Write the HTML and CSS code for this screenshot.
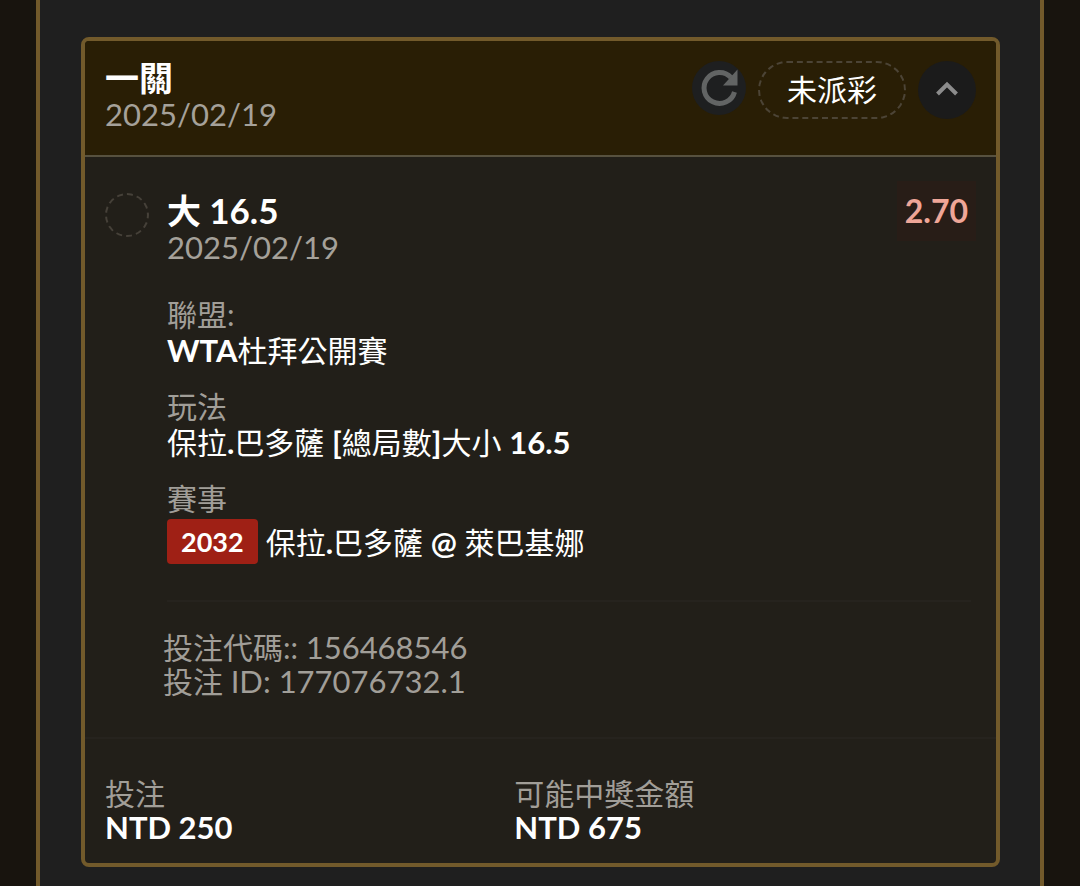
FILE: index.html
```html
<!DOCTYPE html>
<html lang="zh-Hant">
<head>
    <meta charset="UTF-8">
    <meta name="viewport" content="width=device-width, initial-scale=1.0">
    <title>投注紀錄</title>
    <link rel="stylesheet" href="styles.css">
</head>
<body>

    <main class="panel">
        <article class="ticket">
            <header class="ticket-header">
                <div class="ticket-info">
                    <h2 class="ticket-title">一關</h2>
                    <p class="date">2025/02/19</p>
                </div>
                <div class="actions">
                    <button type="button" class="refresh" aria-label="重新整理">
                        <svg width="40" height="40" viewBox="0 0 40 40">
                            <path d="M32 9.5A15.5 15.5 0 1 0 35.5 24" fill="none" stroke="#626464" stroke-width="5"/>
                            <path d="M38.5 1.5V17.5H24Z" fill="#626464"/>
                        </svg>
                    </button>
                    <span class="status">未派彩</span>
                    <button type="button" class="toggle" aria-label="收合">
                        <svg width="24" height="18" viewBox="0 0 24 18">
                            <path d="M2.5 13L12 3.5L21.5 13" fill="none" stroke="#8c8c8c" stroke-width="4"/>
                        </svg>
                    </button>
                </div>
            </header>

            <section class="bet">
                <span class="ring"></span>
                <div class="bet-main">
                    <div class="bet-top">
                        <div class="bet-name">
                            <h3 class="bet-title">大 <span class="num">16.5</span></h3>
                            <p class="date">2025/02/19</p>
                        </div>
                        <span class="odds">2.70</span>
                    </div>

                    <dl class="details">
                        <div>
                            <dt>聯盟:</dt>
                            <dd><b>WTA</b>杜拜公開賽</dd>
                        </div>
                        <div>
                            <dt>玩法</dt>
                            <dd>保拉<b>.</b>巴多薩 <b>[</b>總局數<b>]</b>大小 <b>16.5</b></dd>
                        </div>
                        <div>
                            <dt>賽事</dt>
                            <dd class="match">
                                <span class="match-id">2032</span>
                                <span>保拉<b>.</b>巴多薩 <b>@</b> 萊巴基娜</span>
                            </dd>
                        </div>
                    </dl>

                    <div class="codes">
                        <p>投注代碼:: <span class="code">156468546</span></p>
                        <p>投注 <span class="code">ID: 177076732.1</span></p>
                    </div>
                </div>
            </section>

            <footer class="totals">
                <div>
                    <p class="total-label">投注</p>
                    <p class="total-value">NTD 250</p>
                </div>
                <div>
                    <p class="total-label">可能中獎金額</p>
                    <p class="total-value">NTD 675</p>
                </div>
            </footer>
        </article>
    </main>

</body>
</html>
```
FILE: styles.css
```css
* {
    box-sizing: border-box;
}

body {
    margin: 0;
    background-color: #18140e;
    color: #fff;
    font-family: Lato, "Noto Sans CJK TC", sans-serif;
    font-size: 30px;
    line-height: 36px;
}

h2, h3, p, dl, dd {
    margin: 0;
}

b {
    font-size: 31px;
    line-height: 36px;
    font-weight: 700;
}

button {
    display: flex;
    align-items: center;
    justify-content: center;
    padding: 0;
    border: none;
    border-radius: 50%;
    cursor: pointer;
}

.panel {
    min-height: 100vh;
    margin: 0 36px;
    padding: 37px 40px 18px 41px;
    border: solid #725a2b;
    border-width: 0 4px;
    background-color: #1f1f1f;
}

.ticket {
    border: 4px solid #725a2b;
    border-radius: 8px;
    background-color: #221f19;
    overflow: hidden;
}

.ticket-header {
    display: flex;
    justify-content: space-between;
    align-items: flex-start;
    padding: 19px 20px 23px;
    border-bottom: 2px solid #57513f;
    background-color: #291e05;
}

.ticket-title, .bet-title {
    font-size: 34px;
    line-height: 36px;
    font-weight: 700;
}

.date {
    color: #a5a19a;
    font-size: 31px;
    line-height: 36px;
}

.actions {
    display: flex;
    align-items: flex-start;
    gap: 12px;
    padding-top: 1px;
}

.refresh {
    width: 54px;
    height: 54px;
    background-color: #1e1f20;
}

.toggle {
    width: 58px;
    height: 58px;
    background-color: #1b1b1b;
}

.status {
    padding: 8px 27px 10px;
    border: 2px dashed #4c4436;
    border-radius: 29px;
    line-height: 36px;
}

.bet {
    display: flex;
    gap: 18px;
    padding: 36px 20px 39px;
}

.ring {
    flex: none;
    width: 44px;
    height: 44px;
    border: 2px dashed #464139;
    border-radius: 50%;
}

.bet-main {
    flex: 1;
    margin-top: -1px;
}

.bet-top {
    display: flex;
    justify-content: space-between;
    align-items: flex-start;
}

.num {
    font-size: 35px;
}

.odds {
    margin-top: -11px;
    padding: 12px 8px;
    background-color: #281d17;
    color: #efa698;
    font-size: 32px;
    font-weight: 700;
}

.details {
    display: flex;
    flex-direction: column;
    gap: 20px;
    margin-right: 5px;
    padding: 31px 0 36px;
    border-bottom: 2px solid #26231e;
}

dt, .codes, .total-label {
    color: #a19e98;
}

.match {
    display: flex;
    align-items: center;
    gap: 8px;
    margin-top: 3px;
}

.match-id {
    padding: 5px 14px;
    border-radius: 4px;
    background-color: #9f2015;
    font-size: 27px;
    line-height: 35px;
    font-weight: 700;
}

.codes {
    margin: 28px 0 0 -4px;
    line-height: 34px;
}

.code {
    font-size: 31px;
}

.totals {
    display: grid;
    grid-template-columns: 47% 1fr;
    padding: 37px 20px 19px;
    border-top: 2px solid #26231e;
    line-height: 34px;
}

.total-value {
    font-size: 31px;
    font-weight: 700;
}
```
